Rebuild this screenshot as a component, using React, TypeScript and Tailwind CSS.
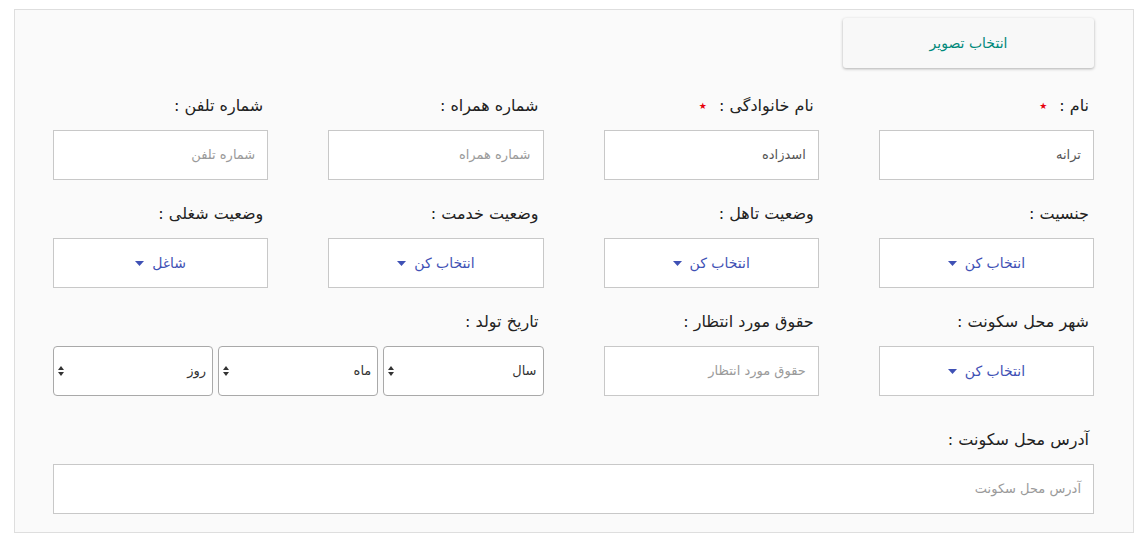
import React from "react";

const font = { fontFamily: '"DejaVu Sans", "Noto Sans", sans-serif' };

const Label = ({ text, required }: { text: string; required?: boolean }) => (
  <div className="h-6 pr-[5px] flex items-center text-[16px] text-[#222] leading-6">
    <span>{text} :</span>
    {required && <span className="text-red-600 text-[9px] mr-3">★</span>}
  </div>
);

const TextInput = ({ value, placeholder }: { value?: string; placeholder: string }) => (
  <div className="mt-3 h-[50px] bg-white border border-[#c8c8c8] flex items-center px-3 text-[13px]">
    {value ? <span className="text-[#555]">{value}</span> : <span className="text-[#9a9a9a]">{placeholder}</span>}
  </div>
);

const Caret = () => (
  <svg width="9" height="5" viewBox="0 0 9 5" className="mr-2">
    <path d="M0 0h9L4.5 5z" fill="#3f51b5" />
  </svg>
);

const Dropdown = ({ value }: { value: string }) => (
  <div className="mt-3 h-[50px] bg-white border border-[#c8c8c8] flex items-center justify-center text-[14px] text-[#3f51b5]">
    <span>{value}</span>
    <Caret />
  </div>
);

const UpDown = () => (
  <svg width="6" height="10" viewBox="0 0 6 10">
    <path d="M3 0L6 4H0z M3 10L0 6h6z" fill="#333" />
  </svg>
);

const DateSelect = ({ value }: { value: string }) => (
  <div className="flex-1 h-[50px] bg-white border border-[#a9a9a9] rounded-[4px] flex items-center justify-between pr-[6px] pl-[4px] text-[13px] text-[#333]">
    <span>{value}</span>
    <UpDown />
  </div>
);

const Field = ({ label, required, children }: { label: string; required?: boolean; children: React.ReactNode }) => (
  <div className="flex flex-col">
    <Label text={label} required={required} />
    {children}
  </div>
);

export default function App() {
  return (
    <div dir="rtl" className="w-[1143px] h-[541px] bg-white pt-[9px] pl-[14px] pr-[9px]" style={font}>
      <div className="w-[1120px] h-[524px] bg-[#fafafa] border border-[#dedede] pt-2 pr-[39px] pl-[38px]">
        <div className="grid grid-cols-4 gap-x-[60px]">
          <button className="col-start-1 h-[50px] w-[251px] bg-[#f8f8f8] rounded-[3px] shadow-[0_1px_3px_rgba(0,0,0,0.3)] text-[#00897b] text-[14px]">
            انتخاب تصویر
          </button>
        </div>

        <div className="grid grid-cols-4 gap-x-[60px] mt-[26px]">
          <Field label="نام" required>
            <TextInput value="ترانه" placeholder="نام" />
          </Field>
          <Field label="نام خانوادگی" required>
            <TextInput value="اسدزاده" placeholder="نام خانوادگی" />
          </Field>
          <Field label="شماره همراه">
            <TextInput placeholder="شماره همراه" />
          </Field>
          <Field label="شماره تلفن">
            <TextInput placeholder="شماره تلفن" />
          </Field>
        </div>

        <div className="grid grid-cols-4 gap-x-[60px] mt-[22px]">
          <Field label="جنسیت">
            <Dropdown value="انتخاب کن" />
          </Field>
          <Field label="وضعیت تاهل">
            <Dropdown value="انتخاب کن" />
          </Field>
          <Field label="وضعیت خدمت">
            <Dropdown value="انتخاب کن" />
          </Field>
          <Field label="وضعیت شغلی">
            <Dropdown value="شاغل" />
          </Field>
        </div>

        <div className="grid grid-cols-4 gap-x-[60px] mt-[22px]">
          <Field label="شهر محل سکونت">
            <Dropdown value="انتخاب کن" />
          </Field>
          <Field label="حقوق مورد انتظار">
            <TextInput placeholder="حقوق مورد انتظار" />
          </Field>
          <div className="col-span-2 flex flex-col">
            <Label text="تاریخ تولد" />
            <div className="mt-3 flex gap-[5px]">
              <DateSelect value="سال" />
              <DateSelect value="ماه" />
              <DateSelect value="روز" />
            </div>
          </div>
        </div>

        <div className="mt-[32px] flex flex-col">
          <Label text="آدرس محل سکونت" />
          <TextInput placeholder="آدرس محل سکونت" />
        </div>
      </div>
    </div>
  );
}
